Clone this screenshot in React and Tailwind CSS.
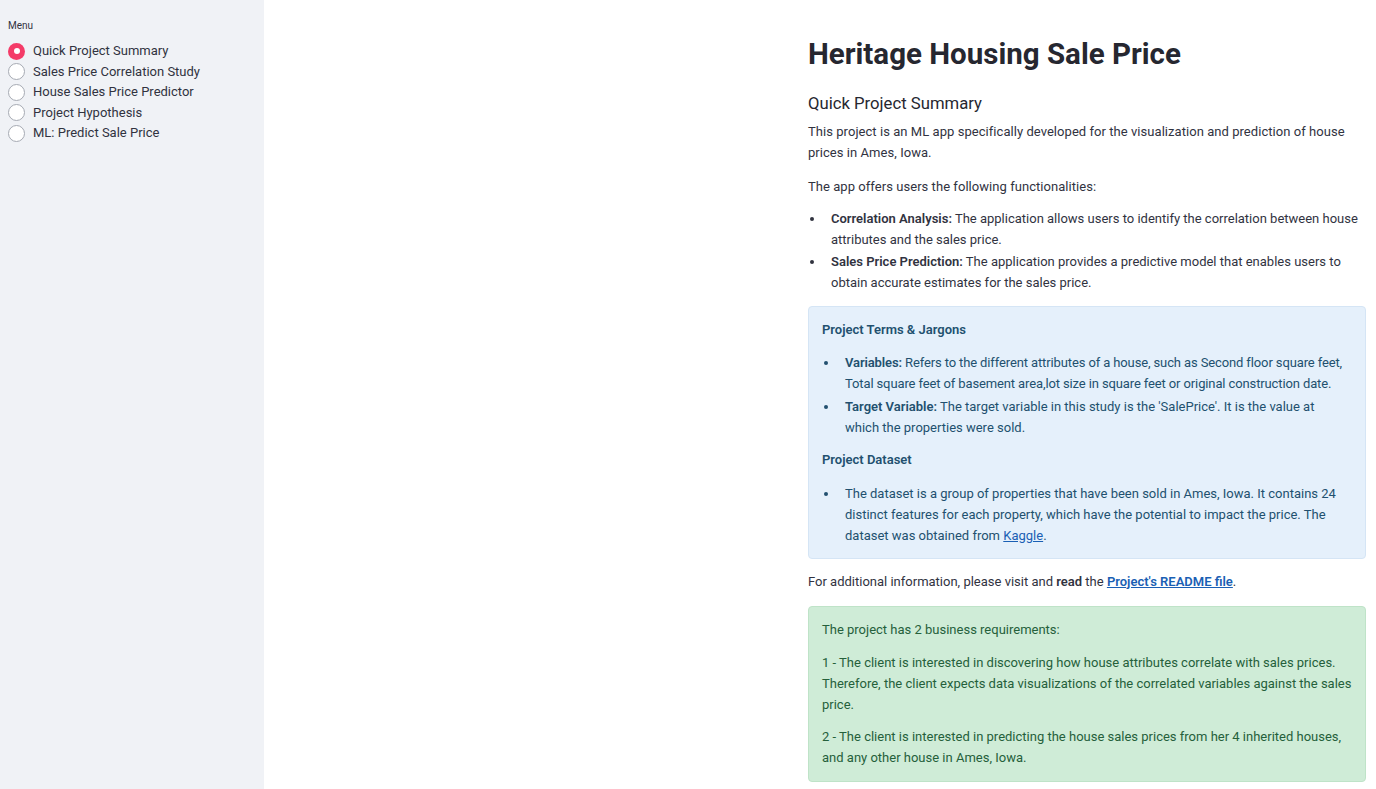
import { useState } from "react";

const menuItems = [
  "Quick Project Summary",
  "Sales Price Correlation Study",
  "House Sales Price Predictor",
  "Project Hypothesis",
  "ML: Predict Sale Price",
];

export default function App() {
  const [selected, setSelected] = useState(0);

  return (
    <div
      className="flex w-full h-[789px] bg-white text-[#31333f] overflow-hidden"
      style={{ fontFamily: "Roboto, 'Liberation Sans', sans-serif" }}
    >
      {/* Sidebar */}
      <aside className="w-[264px] shrink-0 bg-[#f0f2f6] pt-[19px] pl-[8px]">
        <p className="text-[10px] leading-[14px] mb-[8px]">Menu</p>
        <div className="flex flex-col">
          {menuItems.map((item, i) => (
            <Radio key={item} label={item} checked={selected == i} onClick={() => setSelected(i)} />
          ))}
        </div>
      </aside>

      {/* Main */}
      <main className="flex-1 flex justify-end pr-[10px]">
        <div className="w-[558px] pt-[36px] text-[13px] leading-[21px]">
          <h1 className="text-[29.5px] leading-[36px] font-bold text-[#262730]">Heritage Housing Sale Price</h1>

          <h3 className="mt-[19px] text-[16.7px] leading-[26px] text-[#262730]">Quick Project Summary</h3>
          <p className="mt-[3.5px] tracking-[0.05px]">
            This project is an ML app specifically developed for the visualization and prediction of house prices in Ames, Iowa.
          </p>
          <p className="mt-[13px] tracking-[0.05px]">The app offers users the following functionalities:</p>

          <ul className="mt-[11px] flex flex-col gap-[1px]">
            <Bullet>
              <b className="font-semibold">Correlation Analysis:</b> The application allows users to identify the correlation between house attributes and the sales price.
            </Bullet>
            <Bullet>
              <b className="font-semibold">Sales Price Prediction:</b> The application provides a predictive model that enables users to obtain accurate estimates for the sales price.
            </Bullet>
          </ul>

          {/* info box */}
          <div className="mt-[13.5px] rounded-[4px] border border-[#d5e5f5] bg-[#e5f0fb] pl-[13px] pr-[8px] pt-[12px] pb-[12px] text-[#22506f]">
            <p className="font-semibold">Project Terms &amp; Jargons</p>
            <ul className="mt-[12px] flex flex-col gap-[2px]">
              <Bullet>
                <span className="tracking-[-0.12px]">
                  <b className="font-semibold">Variables:</b> Refers to the different attributes of a house, such as Second floor square feet, Total square feet of basement area,lot size in square feet or original construction date.
                </span>
              </Bullet>
              <Bullet>
                <b className="font-semibold">Target Variable:</b> The target variable in this study is the 'SalePrice'. It is the value at
                <br />
                which the properties were sold.
              </Bullet>
            </ul>
            <p className="mt-[11px] font-semibold">Project Dataset</p>
            <ul className="mt-[13px]">
              <Bullet>
                The dataset is a group of properties that have been sold in Ames, Iowa. It contains 24 distinct features for each property, which have the potential to impact the price. The dataset was obtained from{" "}
                <a className="text-[#1a5fb4] underline">Kaggle</a>.
              </Bullet>
            </ul>
          </div>

          <p className="mt-[11.5px]">
            For additional information, please visit and <b className="font-semibold">read</b> the{" "}
            <a className="text-[#1a5fb4] underline font-semibold">Project's README file</a>.
          </p>

          {/* success box */}
          <div className="mt-[14.5px] rounded-[4px] border border-[#bfe3c8] bg-[#cfecd7] px-[13px] pt-[12px] pb-[13px] text-[#25603b]">
            <p>The project has 2 business requirements:</p>
            <p className="mt-[12px]">
              1 - The client is interested in discovering how house attributes correlate with sales prices. Therefore, the client expects data visualizations of the correlated variables against the sales price.
            </p>
            <p className="mt-[11px]">
              2 - The client is interested in predicting the house sales prices from her 4 inherited houses, and any other house in Ames, Iowa.
            </p>
          </div>
        </div>
      </main>
    </div>
  );
}

const Radio = ({ label, checked, onClick }) => {
  return (
    <button type="button" onClick={onClick} className="flex items-center h-[20.5px] text-left">
      {checked ? (
        <span className="w-[17px] h-[17px] rounded-full bg-[#f43b68] flex items-center justify-center">
          <span className="w-[6px] h-[6px] rounded-full bg-white" />
        </span>
      ) : (
        <span className="w-[17px] h-[17px] rounded-full border-[1.5px] border-[#a6aab3] bg-white" />
      )}
      <span className="ml-[8px] text-[13px] leading-[20px] text-[#31333f]">{label}</span>
    </button>
  );
};

const Bullet = ({ children }) => {
  return (
    <li className="flex">
      <span className="w-[23px] shrink-0 flex items-start pt-[9px] pl-[2px]">
        <span className="w-[4px] h-[4px] rounded-full bg-current" />
      </span>
      <span>{children}</span>
    </li>
  );
};
